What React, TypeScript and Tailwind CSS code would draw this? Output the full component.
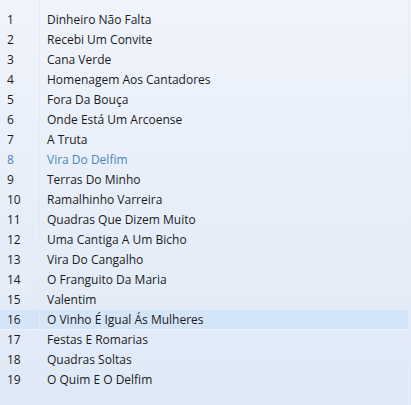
const tracks = [
  "Dinheiro Não Falta",
  "Recebi Um Convite",
  "Cana Verde",
  "Homenagem Aos Cantadores",
  "Fora Da Bouça",
  "Onde Está Um Arcoense",
  "A Truta",
  "Vira Do Delfim",
  "Terras Do Minho",
  "Ramalhinho Varreira",
  "Quadras Que Dizem Muito",
  "Uma Cantiga A Um Bicho",
  "Vira Do Cangalho",
  "O Franguito Da Maria",
  "Valentim",
  "O Vinho É Igual Ás Mulheres",
  "Festas E Romarias",
  "Quadras Soltas",
  "O Quim E O Delfim",
];

const PLAYING = 8;
const SELECTED = 16;

function Spacer({ grow }: { grow?: boolean }) {
  return (
    <div className={grow ? "flex flex-1" : "flex h-[10px]"}>
      <div className="w-[40px] border-r border-[#e2eaf5]" />
      <div className="flex-1" />
    </div>
  );
}

export default function App() {
  return (
    <div className="flex h-[405px] w-[411px] flex-col bg-[linear-gradient(to_bottom,#f0f4fc,#dfe9f6)] font-['Open_Sans',sans-serif] text-[12px] text-[#1b1b1b]">
      <div className="flex h-full w-[409px] flex-col border-r border-[#e6edf6]">
        <Spacer />
        {tracks.map((t, i) => {
          const n = i + 1;
          const selected = n === SELECTED;
          const playing = n === PLAYING;
          return (
            <div
              key={n}
              className={
                "flex h-[20px] items-center " +
                (selected ? "bg-[#d4e5f8] border-b border-[#e8f0fa]" : "")
              }
            >
              <div
                className={
                  "flex h-full w-[40px] items-center border-r border-[#e2eaf5] pl-[7px] " +
                  (playing ? "text-[#4d84bf]" : "")
                }
              >
                {n}
              </div>
              <div className={"pl-[7px] " + (playing ? "text-[#4d84bf]" : "")}>{t}</div>
            </div>
          );
        })}
        <Spacer grow />
      </div>
    </div>
  );
}
